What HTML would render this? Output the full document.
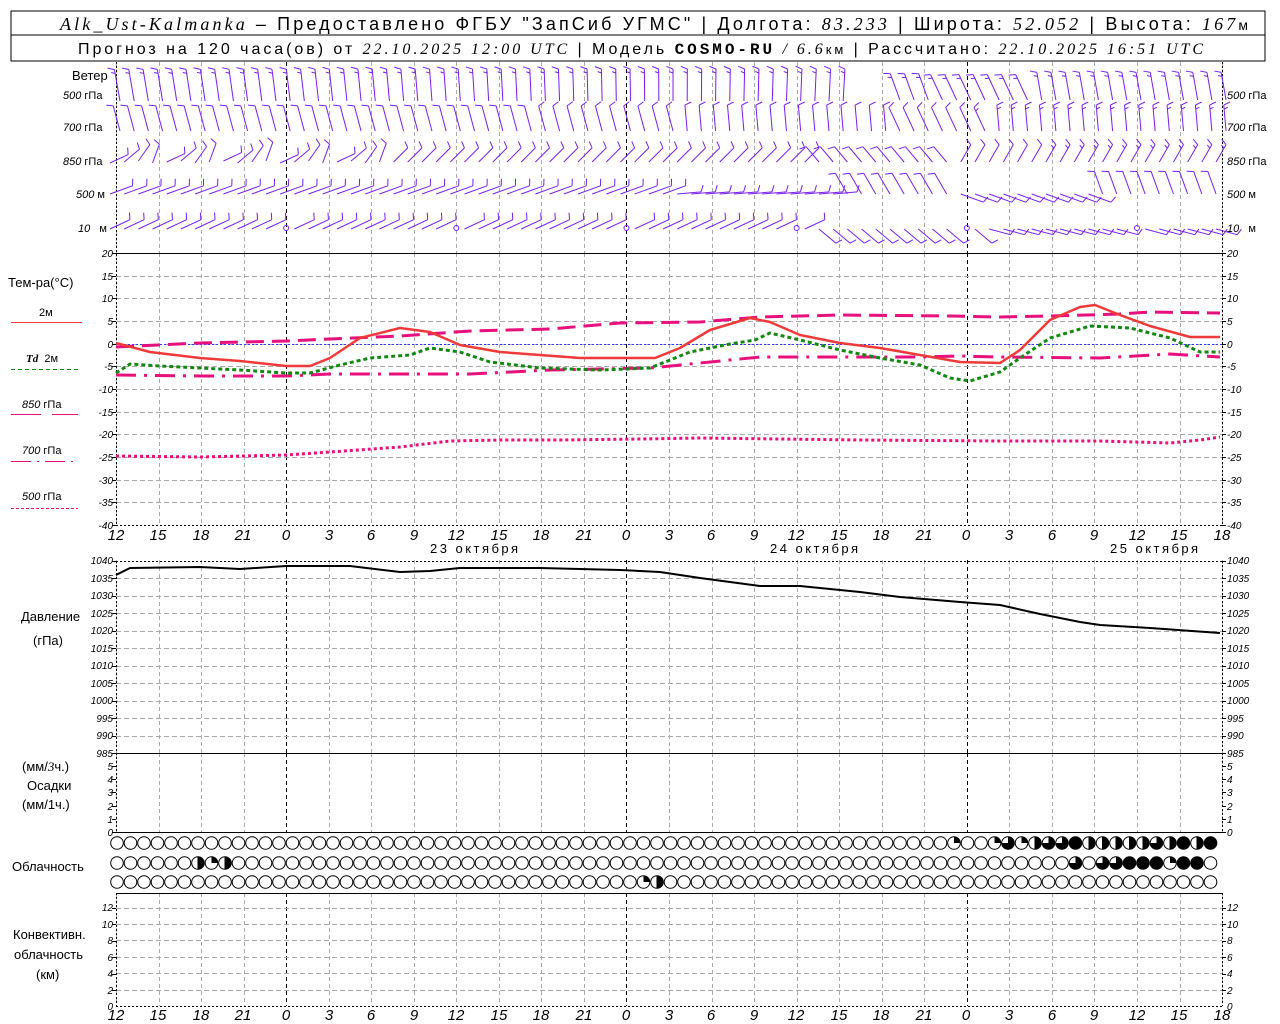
<!DOCTYPE html>
<html><head><meta charset="utf-8"><style>
html,body{margin:0;padding:0;background:#fff;width:1280px;height:1024px;overflow:hidden}
svg{display:block}
text{font-family:"Liberation Sans",sans-serif;fill:#000}
.i{font-family:"Liberation Serif",serif;font-style:italic}
</style></head><body>
<svg id="s" width="1280" height="1024" viewBox="0 0 1280 1024" xmlns="http://www.w3.org/2000/svg">
<rect x="11" y="11" width="1254" height="50" fill="none" stroke="#000" stroke-width="1"/>
<line x1="11" y1="35" x2="1265" y2="35" stroke="#000"/>
<text x="60" y="30" style="font-size:18px" textLength="1188" lengthAdjust="spacing"><tspan class="i">Alk_Ust-Kalmanka</tspan> – Предоставлено ФГБУ "ЗапСиб УГМС" | Долгота: <tspan class="i">83.233</tspan> | Широта: <tspan class="i">52.052</tspan> | Высота: <tspan class="i">167</tspan><tspan style="font-size:14px">м</tspan></text>
<text x="78" y="54" style="font-size:16px" textLength="1125" lengthAdjust="spacing">Прогноз на 120 часа(ов) от <tspan class="i">22.10.2025 12:00 UTC</tspan> | Модель <tspan style="font-family:'Liberation Mono';font-weight:bold">COSMO-RU</tspan> <tspan class="i">/ 6.6</tspan><tspan style="font-size:13px">км</tspan> | Рассчитано: <tspan class="i">22.10.2025 16:51 UTC</tspan></text>
<g id="g"></g>
<g style="font-size:13px">
<text x="72" y="80">Ветер</text>
<text x="8" y="287">Тем-ра(°C)</text>
<text x="39" y="316" style="font-size:11px">2м</text>
<text x="26" y="362" style="font-size:11px"><tspan class="i" style="font-weight:bold">Td</tspan>&#160;&#160;2м</text>
<text x="22" y="408" style="font-size:11px"><tspan style="font-style:italic">850</tspan> гПа</text>
<text x="22" y="454" style="font-size:11px"><tspan style="font-style:italic">700</tspan> гПа</text>
<text x="22" y="500" style="font-size:11px"><tspan style="font-style:italic">500</tspan> гПа</text>
<text x="21" y="621">Давление</text>
<text x="33" y="645">(гПа)</text>
<text x="22" y="771">(мм/<tspan class="i">3</tspan>ч.)</text>
<text x="27" y="790">Осадки</text>
<text x="22" y="809">(мм/1ч.)</text>
<text x="12" y="871">Облачность</text>
<text x="13" y="939">Конвективн.</text>
<text x="14" y="959">облачность</text>
<text x="36" y="979">(км)</text>
<text x="430" y="553" textLength="88" lengthAdjust="spacing">23 октября</text>
<text x="770" y="553" textLength="88" lengthAdjust="spacing">24 октября</text>
<text x="1110" y="553" textLength="88" lengthAdjust="spacing">25 октября</text>
</g>
<g style="font-size:11px;font-style:italic">
<text x="63" y="99">500 <tspan style="font-style:normal">гПа</tspan></text>
<text x="63" y="131">700 <tspan style="font-style:normal">гПа</tspan></text>
<text x="63" y="165">850 <tspan style="font-style:normal">гПа</tspan></text>
<text x="76" y="198">500 <tspan style="font-style:normal">м</tspan></text>
<text x="78" y="232">10 <tspan style="font-style:normal">&#160;&#160;м</tspan></text>
<text x="1227" y="99">500 <tspan style="font-style:normal">гПа</tspan></text>
<text x="1227" y="131">700 <tspan style="font-style:normal">гПа</tspan></text>
<text x="1227" y="165">850 <tspan style="font-style:normal">гПа</tspan></text>
<text x="1227" y="198">500 <tspan style="font-style:normal">м</tspan></text>
<text x="1227" y="232">10 <tspan style="font-style:normal">&#160;&#160;м</tspan></text>
</g>
<g style="font-size:10px;font-style:italic" text-anchor="end">
<text x="113" y="257">20</text><text x="113" y="280">15</text><text x="113" y="302">10</text><text x="113" y="325">5</text><text x="113" y="348">0</text><text x="113" y="370">-5</text><text x="113" y="393">-10</text><text x="113" y="416">-15</text><text x="113" y="438">-20</text><text x="113" y="461">-25</text><text x="113" y="484">-30</text><text x="113" y="506">-35</text><text x="113" y="529">-40</text>
<text x="113" y="564">1040</text><text x="113" y="582">1035</text><text x="113" y="599">1030</text><text x="113" y="617">1025</text><text x="113" y="634">1020</text><text x="113" y="652">1015</text><text x="113" y="669">1010</text><text x="113" y="687">1005</text><text x="113" y="704">1000</text><text x="113" y="722">995</text><text x="113" y="739">990</text><text x="113" y="757">985</text>
<text x="113" y="770">5</text><text x="113" y="783">4</text><text x="113" y="796">3</text><text x="113" y="810">2</text><text x="113" y="823">1</text><text x="113" y="836">0</text>
<text x="113" y="911">12</text><text x="113" y="928">10</text><text x="113" y="944">8</text><text x="113" y="961">6</text><text x="113" y="977">4</text><text x="113" y="994">2</text><text x="113" y="1010">0</text>
</g>
<g style="font-size:10px;font-style:italic">
<text x="1227" y="257">20</text><text x="1227" y="280">15</text><text x="1227" y="302">10</text><text x="1227" y="325">5</text><text x="1227" y="348">0</text><text x="1227" y="370">-5</text><text x="1227" y="393">-10</text><text x="1227" y="416">-15</text><text x="1227" y="438">-20</text><text x="1227" y="461">-25</text><text x="1227" y="484">-30</text><text x="1227" y="506">-35</text><text x="1227" y="529">-40</text>
<text x="1227" y="564">1040</text><text x="1227" y="582">1035</text><text x="1227" y="599">1030</text><text x="1227" y="617">1025</text><text x="1227" y="634">1020</text><text x="1227" y="652">1015</text><text x="1227" y="669">1010</text><text x="1227" y="687">1005</text><text x="1227" y="704">1000</text><text x="1227" y="722">995</text><text x="1227" y="739">990</text><text x="1227" y="757">985</text>
<text x="1227" y="770">5</text><text x="1227" y="783">4</text><text x="1227" y="796">3</text><text x="1227" y="810">2</text><text x="1227" y="823">1</text><text x="1227" y="836">0</text>
<text x="1227" y="911">12</text><text x="1227" y="928">10</text><text x="1227" y="944">8</text><text x="1227" y="961">6</text><text x="1227" y="977">4</text><text x="1227" y="994">2</text><text x="1227" y="1010">0</text>
</g>
<g style="font-size:15px;font-style:italic" text-anchor="middle">
<text x="116" y="540">12</text><text x="158" y="540">15</text><text x="201" y="540">18</text><text x="243" y="540">21</text><text x="286" y="540">0</text><text x="329" y="540">3</text><text x="371" y="540">6</text><text x="414" y="540">9</text><text x="456" y="540">12</text><text x="499" y="540">15</text><text x="541" y="540">18</text><text x="584" y="540">21</text><text x="626" y="540">0</text><text x="669" y="540">3</text><text x="711" y="540">6</text><text x="754" y="540">9</text><text x="796" y="540">12</text><text x="839" y="540">15</text><text x="881" y="540">18</text><text x="924" y="540">21</text><text x="966" y="540">0</text><text x="1009" y="540">3</text><text x="1052" y="540">6</text><text x="1094" y="540">9</text><text x="1137" y="540">12</text><text x="1179" y="540">15</text><text x="1222" y="540">18</text>
<text x="116" y="1020">12</text><text x="158" y="1020">15</text><text x="201" y="1020">18</text><text x="243" y="1020">21</text><text x="286" y="1020">0</text><text x="329" y="1020">3</text><text x="371" y="1020">6</text><text x="414" y="1020">9</text><text x="456" y="1020">12</text><text x="499" y="1020">15</text><text x="541" y="1020">18</text><text x="584" y="1020">21</text><text x="626" y="1020">0</text><text x="669" y="1020">3</text><text x="711" y="1020">6</text><text x="754" y="1020">9</text><text x="796" y="1020">12</text><text x="839" y="1020">15</text><text x="881" y="1020">18</text><text x="924" y="1020">21</text><text x="966" y="1020">0</text><text x="1009" y="1020">3</text><text x="1052" y="1020">6</text><text x="1094" y="1020">9</text><text x="1137" y="1020">12</text><text x="1179" y="1020">15</text><text x="1222" y="1020">18</text>
</g>
</svg>
<script>
var g=document.getElementById('g'),NS='http://www.w3.org/2000/svg';
function el(t,a){var e=document.createElementNS(NS,t);for(var k in a)e.setAttribute(k,a[k]);g.appendChild(e);return e}
function L(x1,y1,x2,y2,c,w,d){var a={x1:x1,y1:y1,x2:x2,y2:y2,stroke:c||'#000','stroke-width':w||1};if(d)a['stroke-dasharray']=d;el('line',a)}
var X0=116,X1=1222,px=14.18;
function hx(h){return X0+h*px}
for(var h=0;h<=78;h+=3){var x=Math.round(hx(h))+.5;var mid=((h+12)%24==0);
 [[62,253],[253,525],[560,753],[753,832],[893,1006]].forEach(function(r){L(x,r[0],x,r[1],mid?'#000':'#aaa',1,'4,3')})}
for(var t=15;t>=-35;t-=5){var y=Math.round(343.7-t*4.533)+.5;L(X0,y,X1,y,'#aaa',1,'5,3')}
for(var p=1035;p>985;p-=5){var y=Math.round(561+(1040-p)*3.49)+.5;L(X0,y,X1,y,'#aaa',1,'5,3')}
L(X0,561.5,X1,561.5,'#000',1,'2,2');
for(var k=2;k<=12;k+=2){var y=Math.round(1006-k*8.2)+.5;L(X0,y,X1,y,'#aaa',1,'5,3')}
L(116,253.5,1222,253.5);L(116,753.5,1222,753.5);L(116,832.5,1222,832.5);L(116,893.5,1222,893.5);L(116,1006.5,1222,1006.5,'#000',1,'2,2');L(116,525.5,1222,525.5,'#000',1,'2,2');
[[62,525],[561,832],[893,1006]].forEach(function(r){L(116.5,r[0],116.5,r[1],'#000',1,'2,2');L(1222.5,r[0],1222.5,r[1],'#000',1,'2,2')});
function ticks(y0,y1,st){for(var y=y0;y<=y1+.1;y+=st){L(112,Math.round(y)+.5,116,Math.round(y)+.5);L(1222,Math.round(y)+.5,1226,Math.round(y)+.5)}}
ticks(253,525,22.67);ticks(561,753,17.45);ticks(766,832,13.2);ticks(908,1006,16.4);
L(X0,344.5,X1,344.5,'#33f',1,'2,2');
function poly(pts,c,w,d){var s=pts.map(function(p){return p[0]+','+p[1]}).join(' ');var a={points:s,fill:'none',stroke:c,'stroke-width':w,'stroke-linejoin':'round'};if(d)a['stroke-dasharray']=d;el('polyline',a)}
poly([[116,347],[200,343],[286,341],[330,339],[400,336],[470,331],[550,329],[620,323],[700,322],[760,317],[840,315],[950,316],[1000,317],[1050,316],[1120,314],[1150,312],[1220,313]],'#e8107c',3,'18,8');
poly([[116,375],[200,376],[286,376],[330,374],[400,374],[470,374],[550,370],[650,368],[700,363],[760,357],[860,357],[920,357],[960,356],[1000,357],[1100,358],[1170,354],[1220,357]],'#e8107c',3,'20,8,3,8');
poly([[116,456],[200,457],[286,455],[330,452],[400,447],[450,441],[500,440],[560,440],[640,439],[700,438],[780,439],[860,440],[1000,441],[1100,441],[1170,443],[1200,440],[1220,437]],'#e8107c',3,'3,3');
poly([[116,373],[130,364],[160,366],[200,368],[240,370],[286,373],[310,373],[340,365],[370,358],[410,355],[430,348],[460,352],[490,362],[540,368],[600,370],[650,368],[690,352],[730,344],[755,340],[770,333],[800,340],[840,350],[880,358],[920,365],[950,378],[970,381],[1000,372],[1020,358],[1050,338],[1090,326],[1130,328],[1170,338],[1200,352],[1220,352]],'#118811',3,'4,3');
poly([[116,343],[150,352],[200,358],[240,361],[286,366],[310,366],[330,358],[360,338],[400,328],[430,332],[460,345],[500,352],[540,355],[580,358],[620,358],[655,358],[680,348],[710,330],[750,318],[770,322],[800,335],[840,343],[880,348],[920,355],[960,362],[1000,363],[1020,350],[1050,320],[1080,307],[1095,305],[1120,315],[1150,326],[1190,337],[1220,337]],'#f03a3a',2.5);
poly([[116,575],[130,568],[200,567],[240,569],[286,566],[350,566],[400,572],[430,571],[460,568],[540,568],[620,570],[660,572],[700,578],[760,586],[800,586],[860,592],[900,597],[960,602],[1000,605],[1040,614],[1080,622],[1100,625],[1150,628],[1220,633]],'#000',2);
L(11,322.5,82,322.5,'#f03a3a',1);L(11,369.5,78,369.5,'#118811',1,'4,3');L(11,414.5,78,414.5,'#e8107c',1,'30,11');L(11,461.5,78,461.5,'#e8107c',1,'20,6,2,6');L(11,508.5,78,508.5,'#e8107c',1,'3,2');
var W='#7a1ef0';
function barb(x,y,ang,len,n,side){var r=ang*Math.PI/180,dx=Math.cos(r),dy=-Math.sin(r);var tx=x+dx*len,ty=y+dy*len;L(x,y,tx,ty,W,1);
 var pr=r+side*1.2;for(var i=0;i<n;i++){var bx=tx-dx*i*4,by=ty-dy*i*4;var f=(i==n-1&&n>1)?4:7;L(bx,by,bx+Math.cos(pr)*f,by-Math.sin(pr)*f,W,1)}}
for(var i=0;i<=78;i++){var x=hx(i),f=i/78;
 if(i<52) barb(x+4,101,100-f*20,32,2,1); else if(i>54) barb(x+4,100,i<58?110:(i<65?115:100),28,2,1);
 barb(x+4,131,i<40?105:(i<55?95:(i<62?115:95)),26,i>60?2:1,i<30?1:-1);
 if(i<20) barb(x-6,163-i%3,25+(i%4)*15,20,1,1); else barb(x-6,162,i<50?45:(i<60?130:60),20,i>65?2:1,1);
 barb(x-6,194,i<40?20:(i<52?5:(i<60?120:(i<70?-20:110))),24,1,1);
 if(i%12!=0||i==0) barb(x-6,229,i<50?25:(i<62?-40:-15),22,1,1); else el('circle',{cx:x,cy:228,r:2.5,fill:'none',stroke:W});
}
function circ(cx,cy,fill){el('circle',{cx:cx,cy:cy,r:6.3,fill:fill==4?'#000':'#fff',stroke:'#000','stroke-width':1});
 if(fill>0&&fill<4){var r=6.3;var d;if(fill==1)d='M'+cx+','+cy+' L'+cx+','+(cy-r)+' A'+r+','+r+' 0 0 1 '+(cx+r)+','+cy+' Z';
  else if(fill==2)d='M'+cx+','+(cy-r)+' A'+r+','+r+' 0 0 1 '+cx+','+(cy+r)+' Z';
  else d='M'+cx+','+cy+' L'+cx+','+(cy-r)+' A'+r+','+r+' 0 1 1 '+(cx-r)+','+cy+' Z';
  el('path',{d:d,fill:'#000'});if(fill==2)L(cx,cy-r,cx,cy+r)}}
var r1={64:1,67:1,68:3,69:1,70:2,71:3,72:3,73:4,74:2,75:2,76:2,77:2,78:2,79:3,80:2,81:4,82:2,83:4},
    r2={6:2,7:1,8:2,73:3,75:3,76:3,77:4,78:4,79:4,80:1,81:4,82:4},r3={39:1,40:2};
for(var i=0;i<82;i++){var cx=117+i*13.5;
 var a=r1[i+2]||0,b=r2[i]||0;
 circ(cx,843,a);circ(cx,863,i>=68?(r2[i+2]||0):b);circ(cx,882,r3[i]||0)}
</script>
</body></html>
